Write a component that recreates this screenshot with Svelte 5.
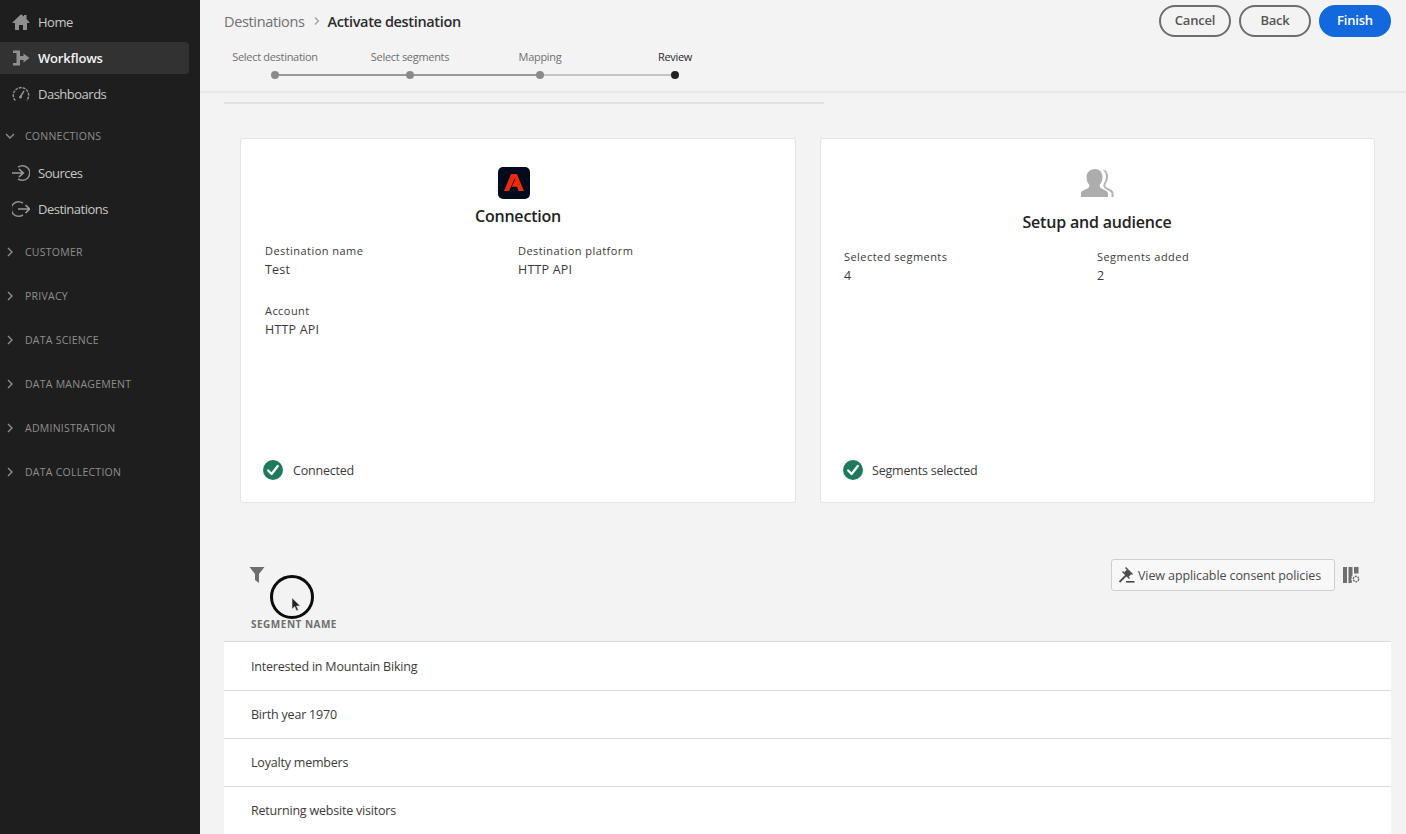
<script>
	const mainNav = [
		{ label: 'Home', icon: 'home' },
		{ label: 'Workflows', icon: 'workflow', active: true },
		{ label: 'Dashboards', icon: 'gauge' }
	];
	const groups = ['Customer', 'Privacy', 'Data Science', 'Data Management', 'Administration', 'Data Collection'];
	const steps = ['Select destination', 'Select segments', 'Mapping', 'Review'];
	const segments = ['Interested in Mountain Biking', 'Birth year 1970', 'Loyalty members', 'Returning website visitors'];
</script>

{#snippet check()}
	<svg class="check" viewBox="0 0 20 20" width="20" height="20">
		<circle cx="10" cy="10" r="10" fill="#1f7a5c" />
		<path d="M5.2 10.4l3.4 3.6 6.2-8" fill="none" stroke="#fff" stroke-width="2.2" stroke-linecap="round" stroke-linejoin="round" />
	</svg>
{/snippet}

{#snippet chevron(open)}
	<svg class="chev" class:open viewBox="0 0 10 10" width="10" height="10">
		<path d="M3 1l4 4-4 4" fill="none" stroke="currentColor" stroke-width="1.4" />
	</svg>
{/snippet}

<div class="app">
	<aside class="sidebar">
		<nav class="top-nav">
			{#each mainNav as item}
				<div class="nav-item" class:active={item.active}>
					<svg class="nav-icon" viewBox="0 0 18 18" width="18" height="18">
						{#if item.icon === 'home'}
							<path d="M9 1.2L.6 9.2c-.3.4 0 .8.4.8H3v6.400c0 .3.2.5.5.5H7v-5h4v5h3.500c.3 0 .5-.2.5-.5V10h2c.4 0 .7-.4.4-.8L14.500 6V2h-2.500v1.600z" fill="#8f8f8f" />
						{:else if item.icon === 'workflow'}
							<path d="M1 1.500h7v5.500h3.500V4.500l6 4.500-6 4.500V11H8v5.500H1v-2.600h3.500V4.100H1z" fill="#8f8f8f" />
						{:else}
							<path d="M3.300 15.500A7.700 7.700 0 1 1 14.700 15.500" fill="none" stroke="#8f8f8f" stroke-width="1.500" stroke-dasharray="2.800 1" />
							<path d="M8.500 11.500l3.500-5.500" fill="none" stroke="#8f8f8f" stroke-width="1.500" />
							<circle cx="8.500" cy="12" r="1.500" fill="#8f8f8f" />
						{/if}
					</svg>
					<span>{item.label}</span>
				</div>
			{/each}
		</nav>

		<div class="group open-group">{@render chevron(true)}<span>CONNECTIONS</span></div>
		<div class="nav-item sub">
			<svg class="nav-icon" viewBox="0 0 18 18" width="18" height="18">
				<path d="M6 3.200A7.300 7.300 0 1 1 6 14.800" fill="none" stroke="#8f8f8f" stroke-width="1.500" />
				<path d="M0 9h10M7 5l4.300 4L7 13" fill="none" stroke="#9a9a9a" stroke-width="1.700" />
			</svg>
			<span>Sources</span>
		</div>
		<div class="nav-item sub">
			<svg class="nav-icon" viewBox="0 0 18 18" width="18" height="18">
				<path d="M11 3.200A7.300 7.300 0 1 0 11 14.800" fill="none" stroke="#8f8f8f" stroke-width="1.500" />
				<path d="M6 9h11.500M13.500 5l4 4-4 4" fill="none" stroke="#9a9a9a" stroke-width="1.700" />
			</svg>
			<span>Destinations</span>
		</div>

		<div class="groups">
			{#each groups as group}
				<div class="group">{@render chevron(false)}<span>{group.toUpperCase()}</span></div>
			{/each}
		</div>
	</aside>

	<main class="main">
		<header class="header">
			<div class="header-left">
				<div class="crumbs">
					<span class="crumb">Destinations</span>
					<svg viewBox="0 0 10 10" width="10" height="10"><path d="M3 1.500L6.500 5 3 8.500" fill="none" stroke="#9a9a9a" stroke-width="1.200" /></svg>
					<strong>Activate destination</strong>
				</div>
				<ol class="steps">
					{#each steps as step, i}
						<li class="step" class:current={i === 3}>
							<span class="step-label">{step}</span>
							<span class="dot"></span>
						</li>
					{/each}
				</ol>
			</div>
			<div class="actions">
				<button class="btn">Cancel</button>
				<button class="btn">Back</button>
				<button class="btn primary">Finish</button>
			</div>
		</header>

		<div class="rule"></div>

		<section class="cards">
			<article class="card">
				<div class="card-head">
					<svg class="logo" viewBox="0 0 32 32" width="32" height="32">
						<rect width="32" height="32" rx="5" fill="#000b1d" />
						<path d="M13 7h6l7 17h-5.300l-1.700-4.300h-5.300l3.500-7.200-.4-1L11 24H6z" fill="#eb2a0e" />
					</svg>
					<h2>Connection</h2>
				</div>
				<dl class="fields">
					<div><dt>Destination name</dt><dd>Test</dd></div>
					<div><dt>Destination platform</dt><dd>HTTP API</dd></div>
					<div><dt>Account</dt><dd>HTTP API</dd></div>
				</dl>
				<div class="status">{@render check()}<span>Connected</span></div>
			</article>

			<article class="card">
				<div class="card-head audience">
					<svg viewBox="0 0 34 32" width="34" height="32">
						<path d="M23.500 2.500c3 .8 4.500 3.500 4.500 7 0 3-1 5.500-2.500 7.500-.5 1.500 0 3 1.500 3.800 3 1.400 6 2.500 6.500 4.700V30h-2v-3.500c-.5-2-4-3.500-6.500-5-2-1.300-2-3.800-1-5.500 1.300-2 2-4 2-6.500 0-2.500-.8-4.500-2.500-5.800z" fill="#b3b3b3" />
						<path d="M15 2c4.500 0 7.500 3.300 7.500 8 0 3-1 5.500-2.500 7.500-.8 1.800 0 3.200 1.500 4 3 1.500 6 2.300 6.500 4.500V30H1v-4c.5-2.200 3.500-3 6.500-4.500 1.500-.8 2.300-2.200 1.500-4C7.500 15.500 6.500 13 6.500 10 6.500 5.300 10.500 2 15 2z" fill="#adadad" />
					</svg>
					<h2>Setup and audience</h2>
				</div>
				<dl class="fields">
					<div><dt>Selected segments</dt><dd>4</dd></div>
					<div><dt>Segments added</dt><dd>2</dd></div>
				</dl>
				<div class="status">{@render check()}<span>Segments selected</span></div>
			</article>
		</section>

		<div class="toolbar">
			<svg class="filter" viewBox="0 0 16 18" width="16" height="18">
				<path d="M.5 1h15L10 8v9l-4-3V8z" fill="#6e6e6e" />
			</svg>
			<div class="tools">
				<button class="policy">
					<svg viewBox="0 0 18 18" width="18" height="18" fill="none" stroke="#4b4b4b">
						<path d="M1.500 16L9 8.500" stroke-width="1.800" />
						<path d="M7.500 5l4.500 4.500" stroke-width="4" />
						<path d="M7.500 1.500l7 7" stroke-width="1.400" />
						<path d="M4.500 5.500l7 7" stroke-width="1.400" />
						<path d="M8 15.800h8.500" stroke-width="1.600" />
					</svg>
					<span>View applicable consent policies</span>
				</button>
				<svg viewBox="0 0 18 18" width="18" height="18">
					<path d="M1 1h4v16H1zM6.500 1h4v8.500l-1 .8.500 2-1 .7 1 2.500-.500 1.500h-3zM12 1h4.500v6.500H12z" fill="#6e6e6e" />
					<circle cx="14" cy="13" r="2.700" fill="none" stroke="#6e6e6e" stroke-width="1.500" stroke-dasharray="2 .8" />
				</svg>
			</div>
		</div>

		<div class="table">
			<div class="table-head">SEGMENT NAME</div>
			{#each segments as segment}
				<div class="row">{segment}</div>
			{/each}
		</div>

		<!-- screen recording pointer, sits over the table header -->
		<div class="pointer">
			<svg viewBox="0 0 12 18" width="11" height="16">
				<path d="M1 1v12.500l3-2.800 2 4.800 2-.8-2-4.700h4.200z" fill="#222" stroke="#ddd" stroke-width=".6" />
			</svg>
		</div>
	</main>
</div>

<style>
	:global(body) {
		margin: 0;
		background: #f3f3f3;
	}

	.app {
		display: flex;
		height: 834px;
		overflow: hidden;
		font-family: 'Open Sans', 'Noto Sans', sans-serif;
		color: #2c2c2c;
	}

	.sidebar {
		flex: 0 0 200px;
		background: #1e1e1e;
		color: #c8c8c8;
		padding-top: 6px;
		box-sizing: border-box;
	}

	.nav-item {
		display: flex;
		align-items: center;
		height: 32px;
		margin: 0 11px 4px 0;
		padding-left: 12px;
		gap: 8px;
		font-size: 13px;
		letter-spacing: -0.5px;
		border-radius: 0 4px 4px 0;
	}

	.nav-item.active {
		background: #323232;
		color: #f2f2f2;
		font-weight: 600;
		letter-spacing: -0.2px;
	}

	.nav-icon {
		flex: none;
	}

	.group {
		display: flex;
		align-items: center;
		height: 20px;
		padding-left: 5px;
		gap: 10px;
		color: #8e8e8e;
		font-size: 10.5px;
		letter-spacing: 0.25px;
	}

	.open-group {
		margin: 16px 0 11px;
	}

	.chev.open {
		transform: rotate(90deg);
	}

	.groups {
		display: flex;
		flex-direction: column;
		gap: 24px;
		margin-top: 17px;
	}

	.main {
		position: relative;
		flex: 1;
		min-width: 0;
		padding: 0 15px 0 24px;
	}

	.header {
		display: flex;
		justify-content: space-between;
		margin: 0 -15px 0 -24px;
		padding: 5px 15px 0 24px;
		border-bottom: 2px solid #e8e8e8;
		box-sizing: content-box;
		height: 86px;
	}

	.crumbs {
		display: flex;
		align-items: center;
		gap: 7px;
		height: 32px;
		font-size: 14.500px;
		letter-spacing: -0.35px;
	}

	.crumb {
		color: #707070;
	}

	.crumbs strong {
		margin-left: -1px;
		color: #2c2c2c;
		font-weight: 600;
	}

	.steps {
		display: grid;
		grid-template-columns: 134px 136px 124px 146px;
		margin: 12px 0 0 -16px;
		padding: 0;
		list-style: none;
	}

	.step {
		position: relative;
		display: flex;
		flex-direction: column;
		align-items: center;
		gap: 6px;
		font-size: 11px;
		letter-spacing: -0.3px;
		color: #707070;
	}

	.step.current {
		color: #2c2c2c;
	}

	.step-label {
		line-height: 16px;
	}

	.dot {
		position: relative;
		z-index: 1;
		width: 8px;
		height: 8px;
		border-radius: 50%;
		background: #8a8a8a;
	}

	.step.current .dot {
		background: #222;
	}

	.step:not(:last-child)::after {
		content: '';
		position: absolute;
		left: 50%;
		width: 135px;
		bottom: 3px;
		height: 2px;
		background: #999;
	}

	.step:nth-child(2)::after {
		width: 130px;
	}

	.step:nth-child(3)::after {
		background: #c4c4c4;
	}

	.actions {
		display: flex;
		gap: 8px;
	}

	.btn {
		box-sizing: border-box;
		width: 72px;
		height: 32px;
		border: 2px solid #6e6e6e;
		border-radius: 16px;
		background: transparent;
		color: #555;
		font: 600 13px 'Open Sans', sans-serif;
		letter-spacing: -0.2px;
		padding: 0 0 2px;
	}

	.btn.primary {
		background: #1268dc;
		border-color: #1268dc;
		color: #fff;
	}

	.rule {
		width: 600px;
		height: 2px;
		margin-top: 9px;
		background: #e0e0e0;
	}

	.cards {
		display: grid;
		grid-template-columns: 556px 555px;
		gap: 24px;
		margin: 34px 0 0 16px;
	}

	.card {
		position: relative;
		box-sizing: border-box;
		height: 365px;
		padding: 28px 24px 0;
		background: #fff;
		border: 1px solid #e4e4e4;
		border-radius: 3px;
	}

	.card + .card {
		padding-left: 23px;
	}

	.card-head {
		display: flex;
		flex-direction: column;
		align-items: center;
		gap: 7px;
	}

	.logo {
		margin-left: -8px;
	}

	.card-head.audience {
		gap: 13px;
	}

	h2 {
		margin: 0;
		font-size: 16px;
		line-height: 20px;
		font-weight: 600;
		letter-spacing: -0.2px;
		color: #222;
	}

	.fields {
		display: grid;
		grid-template-columns: 253px 1fr;
		row-gap: 23px;
		margin: 16px 0 0;
	}

	dt {
		padding-bottom: 1px;
		font-size: 11px;
		line-height: 18px;
		letter-spacing: 0.45px;
		color: #3a3a3a;
	}

	dd {
		margin: 0;
		font-size: 12.500px;
		line-height: 18px;
		letter-spacing: 0.2px;
		color: #3a3a3a;
	}

	.status {
		position: absolute;
		left: 22px;
		bottom: 22px;
		display: flex;
		align-items: center;
		gap: 10px;
		font-size: 12.500px;
		letter-spacing: -0.2px;
		color: #3a3a3a;
	}

	.card + .card .status {
		gap: 9px;
	}

	.toolbar {
		display: flex;
		justify-content: space-between;
		margin: 56px 0 0 25px;
		height: 32px;
		align-items: center;
	}

	.filter {
		flex: none;
	}

	.tools {
		display: flex;
		align-items: center;
		gap: 7px;
		margin-right: 31px;
	}

	.policy {
		display: flex;
		align-items: center;
		gap: 2px;
		box-sizing: border-box;
		width: 224px;
		height: 32px;
		padding: 0 6px;
		background: #f8f8f8;
		border: 1px solid #cfcfcf;
		border-radius: 3px;
		color: #4b4b4b;
		font: 12.500px 'Open Sans', sans-serif;
		letter-spacing: -0.1px;
		white-space: nowrap;
	}

	.table {
		margin-top: 26px;
	}

	.table-head {
		height: 25px;
		padding-left: 27px;
		font-size: 10px;
		font-weight: 700;
		line-height: 14px;
		letter-spacing: 0.5px;
		color: #6e6e6e;
		border-bottom: 1px solid #dcdcdc;
		box-sizing: border-box;
	}

	.row {
		display: flex;
		align-items: center;
		box-sizing: border-box;
		height: 48px;
		padding-left: 27px;
		background: #fff;
		border-bottom: 1px solid #dcdcdc;
		font-size: 12.500px;
		letter-spacing: -0.2px;
		color: #3a3a3a;
	}

	.table-head + .row {
		height: 49px;
		padding-top: 1px;
	}

	.pointer {
		position: absolute;
		left: 70px;
		top: 575px;
		box-sizing: border-box;
		width: 44px;
		height: 44px;
		border: 3px solid #0c0c0c;
		border-radius: 50%;
	}

	.pointer svg {
		position: absolute;
		left: 18px;
		top: 19px;
	}
</style>
